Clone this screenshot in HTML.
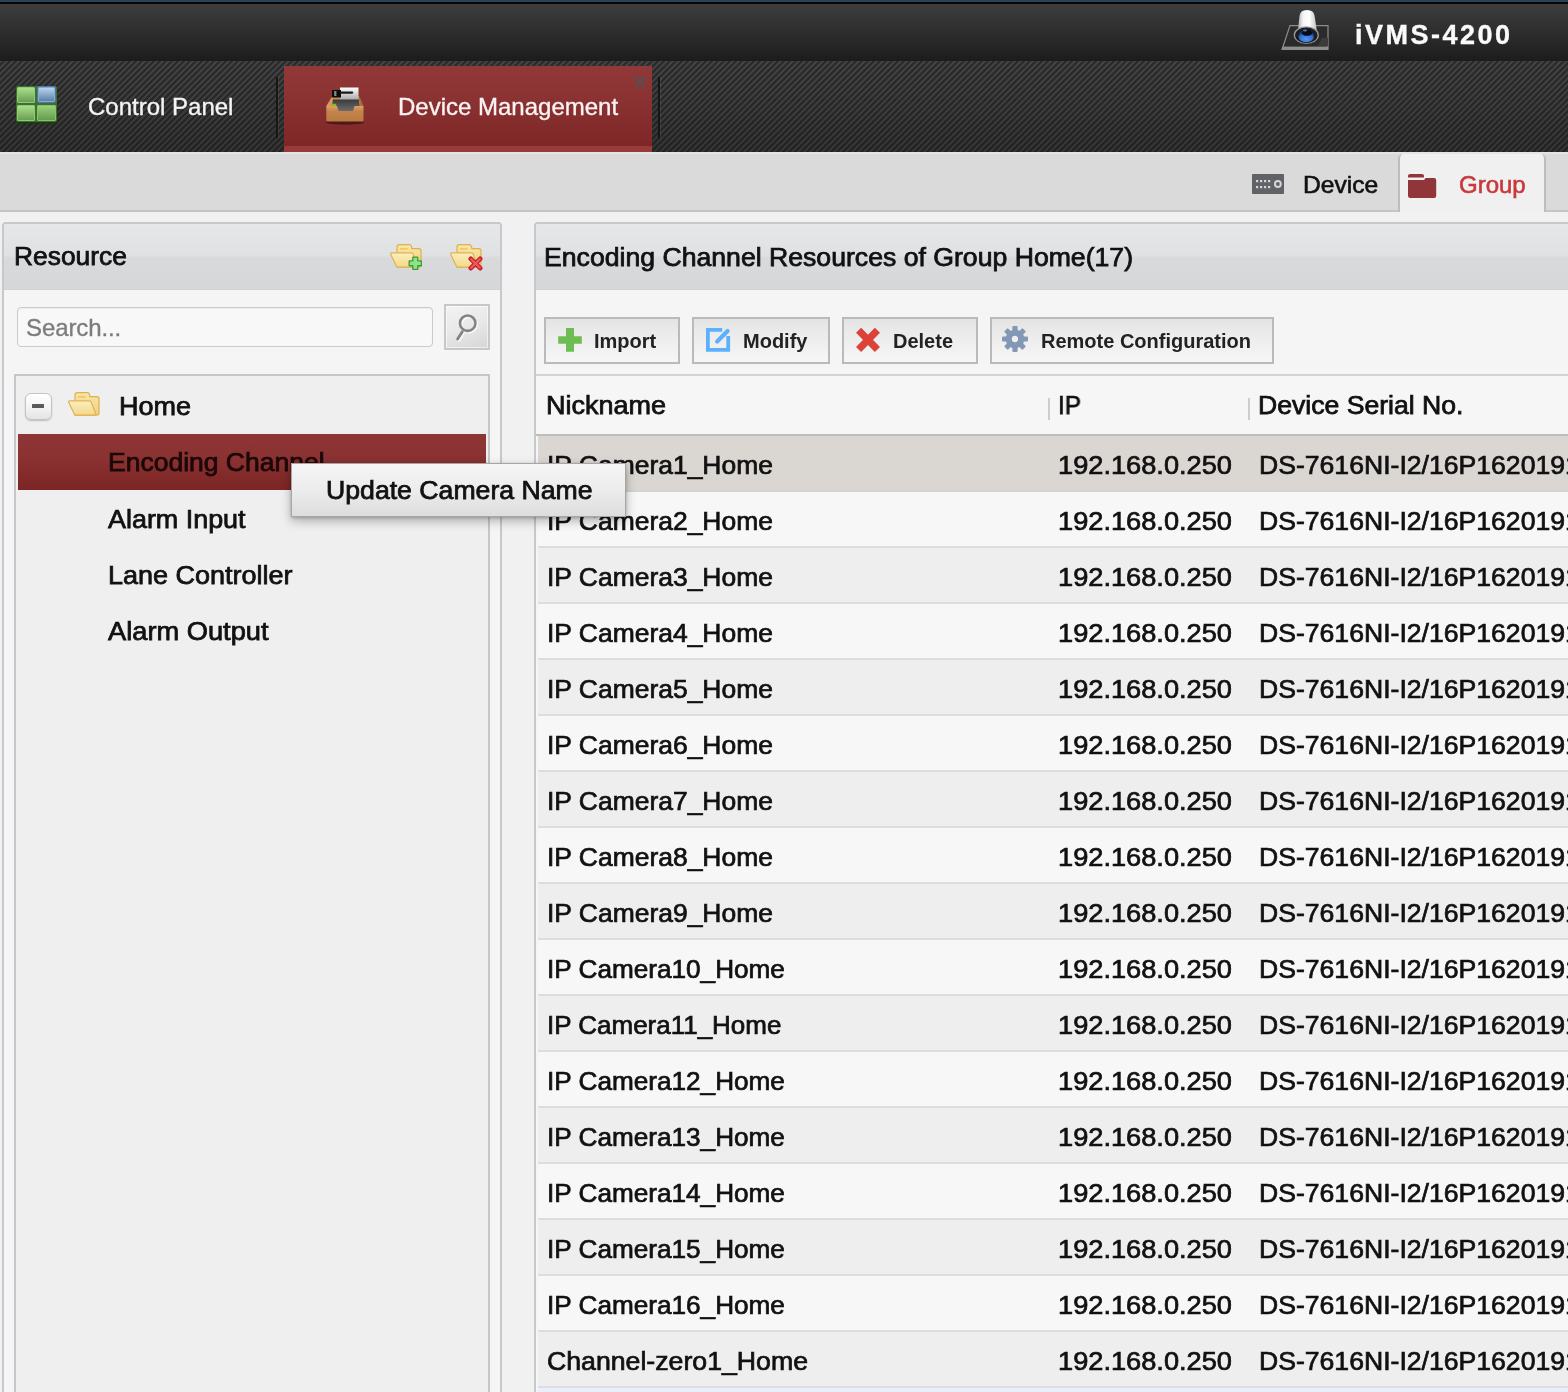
<!DOCTYPE html>
<html>
<head>
<meta charset="utf-8">
<title>iVMS-4200</title>
<style>
*{box-sizing:border-box;margin:0;padding:0}
html,body{width:1568px;height:1392px;overflow:hidden;background:#f1f1f1;font-family:"Liberation Sans",sans-serif;color:#111}
.abs{position:absolute}
.t{position:absolute;white-space:nowrap;line-height:1;transform-origin:0 0;-webkit-text-stroke:0.35px;will-change:transform}
/* ---------- top chrome ---------- */
#topline{left:0;top:0;width:1568px;height:2px;background:#2a4256}
#topblack{left:0;top:2px;width:1568px;height:2px;background:#060606}
#titlebar{left:0;top:4px;width:1568px;height:57px;background:linear-gradient(#3d3d3d 0%,#323232 35%,#252525 75%,#1d1c1c 100%)}
#tabbar{left:0;top:61px;width:1568px;height:91px;
 background-color:#2b2b2b;
 background-image:linear-gradient(135deg,#424242 25%,#2b2b2b 25%,#2b2b2b 50%,#424242 50%,#424242 75%,#2b2b2b 75%);
 background-size:6px 6px}
#tabshade{left:0;top:61px;width:1568px;height:91px;background:linear-gradient(rgba(0,0,0,.0) 0%,rgba(0,0,0,.12) 60%,rgba(0,0,0,.22) 100%)}
#redtab{left:284px;top:66px;width:368px;height:86px;background:linear-gradient(#913939 0%,#8a3131 40%,#7f2727 92%,#7f2727 92%)}
#redtabfoot{left:284px;top:146px;width:368px;height:6px;background:#993a3a}
.sep{width:2px;background:#161616;box-shadow:1px 0 0 rgba(255,255,255,.08)}
/* ---------- sub bar ---------- */
#subbar{left:0;top:152px;width:1568px;height:60px;background:#dadada;border-top:2px solid #e4e4e4;border-bottom:2px solid #c5c5c5}
#grouptab{left:1398px;top:154px;width:148px;height:58px;background:#f0f0f0;border-left:2px solid #bdbdbd;border-right:2px solid #bdbdbd;border-radius:5px 5px 0 0}
/* ---------- panels ---------- */
.panel{border:2px solid #c6c8cc;background:#f5f5f5;border-radius:4px;overflow:hidden}
.phead{left:0;top:0;height:66px;background:linear-gradient(#e6e7e8 0%,#e0e1e2 48%,#d9dadc 52%,#d6d7d9 100%);border-bottom:1px solid #cfd0d3}

.inp{left:12.5px;top:82.5px;width:416.5px;height:40.5px;border:1.5px solid #c8cacc;border-radius:4px;background:#f8f8f8;box-shadow:inset 0 1px 1px rgba(0,0,0,.05)}
.sbtn{left:440.2px;top:80px;width:45.6px;height:46px;border:2px solid #c8c8c8;background:linear-gradient(160deg,#f3f3f3 0%,#e8e8e8 50%,#d6d6d6 100%);box-shadow:0 0 0 1px rgba(255,255,255,.55) inset}
.tree{left:10px;top:150px;width:476px;height:1060px;border:2px solid #c4c6c9;background:#efefef}
.selrow{left:2px;top:58px;width:468px;height:55.5px;background:linear-gradient(#8e3636 0%,#8a3131 45%,#7c2525 100%)}
.minus{left:8.6px;top:16.6px;width:27px;height:27px;border:1px solid #c4c4c4;border-radius:6px;background:linear-gradient(#ffffff 0%,#f6f6f6 45%,#e4e4e4 100%);box-shadow:0 1px 1.5px rgba(0,0,0,.22)}
.minus i{position:absolute;left:6.4px;top:10.6px;width:12px;height:3.4px;background:#5a5a5a;border-radius:.5px}
.sf{font-size:25px;color:#111;-webkit-text-stroke:0.75px}

.btn{top:92.5px;height:47px;border:2px solid #bababa;background:linear-gradient(#e4e4e4 0%,#ececec 40%,#f6f6f6 100%)}
.bt{font-size:20px;font-weight:bold;color:#222;top:106.8px;-webkit-text-stroke:0}
.tbline{left:0;top:150px;width:1036px;height:2px;background:#d2d3d5}
.thead{left:0;top:152px;width:1036px;height:60px;background:#f6f6f6;border-bottom:2px solid #bdbdbd}
.colsep{top:174px;width:2px;height:22px;background:#cdcdcd}
.row{left:2px;width:1036px;height:56px;border-bottom:2px solid #dddddd}
.row.a{background:#f7f7f7}
.row.b{background:#eeeeee}
.row.sel{background:#dad6d1;border-bottom-color:#d6d3ce}
.row .t{top:16.8px;font-size:25px;color:#111;-webkit-text-stroke:0.7px}
.c1{left:9px}.c2{left:520.3px;transform:scaleX(1.088)}.c3{left:720.5px;transform:scaleX(1.0636)}

#popup{left:290.5px;top:462.5px;width:335.5px;height:54.5px;border:1.5px solid #a6a6a6;background:linear-gradient(#f5f5f5 0%,#ececec 50%,#dddddd 100%);box-shadow:0 4px 10px rgba(0,0,0,.28),0 1px 3px rgba(0,0,0,.2)}
</style>
</head>
<body>
<svg width="0" height="0" style="position:absolute">
 <defs>
  <linearGradient id="fgb" x1="0" y1="0" x2="0" y2="1"><stop offset="0" stop-color="#f9e6a6"/><stop offset="1" stop-color="#efd07f"/></linearGradient>
  <linearGradient id="fgf" x1="0" y1="0" x2="0" y2="1"><stop offset="0" stop-color="#fcefbe"/><stop offset="1" stop-color="#f3d88a"/></linearGradient>
  <symbol id="folder" viewBox="0 0 32 24">
   <path d="M7,3 Q7,0.6 9.4,0.6 L19.2,0.6 Q21,0.6 21.4,2.4 L21.9,4.6 L28.8,4.6 Q31,4.6 31,6.8 L31,21 Q31,23.2 28.8,23.2 L7,23.2 Z" fill="url(#fgb)" stroke="#ddb050" stroke-width="1.2"/>
   <path d="M10,4.9 L17.6,4.9" stroke="#ecbf58" stroke-width="1.3" fill="none"/>
   <path d="M1.8,8.8 L21.3,8.8 Q22.6,8.8 23.1,10 L27.6,21.3 Q28.2,23.2 26.2,23.2 L8.3,23.2 Q6.9,23.2 6.3,21.9 L0.8,10.6 Q0.2,8.8 1.8,8.8 Z" fill="url(#fgf)" stroke="#dfb256" stroke-width="1.2"/>
  </symbol>
 </defs>
</svg>

<!-- top chrome -->
<div class="abs" id="topline"></div>
<div class="abs" id="topblack"></div>
<div class="abs" id="titlebar"></div>
<div class="abs" id="tabbar"></div>
<div class="abs" id="tabshade"></div>
<div class="abs" id="redtab"></div>
<div class="abs" id="redtabfoot"></div>
<div class="abs sep" style="left:276px;top:77px;height:61px"></div>
<div class="abs sep" style="left:658px;top:77px;height:61px"></div>
<div class="t" id="tx_cp" style="left:88px;top:95px;font-size:24px;color:#f4f4f4">Control Panel</div>
<div class="t" id="tx_dm" style="left:397.5px;top:95px;font-size:24px;color:#fbf3f3">Device Management</div>
<div class="t" id="tx_ivms" style="left:1355px;top:21.5px;font-size:27px;font-weight:bold;letter-spacing:2.5px;color:#fafafa">iVMS-4200</div>


<div class="abs" id="subbar"></div>
<div class="abs" id="grouptab"></div>
<!-- control panel icon -->
<div class="abs" id="ic_cp" style="left:16px;top:86px;width:40.5px;height:36px;background:#3f6f30;border-radius:2px;box-shadow:0 2px 2px rgba(25,60,18,.85)">
  <div class="abs" style="left:1px;top:1px;width:18px;height:16px;background:linear-gradient(#a9df89,#6a9e52);border:1px solid #8fcb72;border-radius:1px"></div>
  <div class="abs" style="left:21.7px;top:1px;width:17.3px;height:14.8px;background:linear-gradient(#b8d4ea,#5c81a9);border:1px solid #86acd0;border-radius:1px;box-shadow:0 0 0 1px #4a76a8"></div>
  <div class="abs" style="left:1px;top:19px;width:18px;height:16px;background:linear-gradient(#a9df89,#6a9e52);border:1px solid #8fcb72;border-radius:1px"></div>
  <div class="abs" style="left:21px;top:19px;width:19px;height:16px;background:linear-gradient(#98d278,#669a4e);border:1px solid #86c269;border-radius:1px"></div>
</div>
<!-- device management icon -->
<svg class="abs" id="ic_dm" style="left:322px;top:84px" width="46" height="44" viewBox="322 84 46 44">
  <defs>
   <linearGradient id="wd" x1="0" y1="0" x2="0" y2="1"><stop offset="0" stop-color="#dfa064"/><stop offset=".35" stop-color="#c28449"/><stop offset="1" stop-color="#b87a42"/></linearGradient>
   <linearGradient id="pn" x1="0" y1="0" x2="0" y2="1"><stop offset="0" stop-color="#ffffff"/><stop offset="1" stop-color="#a8a8a8"/></linearGradient>
   <linearGradient id="dk" x1="0" y1="0" x2="0" y2="1"><stop offset="0" stop-color="#3a3a3a"/><stop offset="1" stop-color="#6c6c6c"/></linearGradient>
  </defs>
  <ellipse cx="345" cy="122.5" rx="19" ry="2.2" fill="rgba(40,10,10,.55)"/>
  <path d="M333,96 L359,96 L361,106 L331,106 Z" fill="#c98a50"/>
  <rect x="340" y="87.5" width="18.5" height="12.5" fill="url(#pn)"/>
  <rect x="332" y="90" width="9" height="7.5" fill="#0c0c0c"/>
  <rect x="334.2" y="91" width="2.2" height="5" fill="#8a8a8a"/>
  <rect x="340" y="91.4" width="13.2" height="2.4" rx="1.2" fill="#1a1a1a"/>
  <path d="M332.5,99.4 L358.8,99.4 L360.3,111 L332.5,111 Z" fill="url(#dk)"/>
  <rect x="331.8" y="103.8" width="4.4" height="2.4" fill="#79c020"/>
  <path d="M326.3,106 L337,106 L338.5,111 L353,111 L354.5,106 L363.5,106 L363.5,120 Q363.5,121.6 362,121.6 L328,121.6 Q326.3,121.6 326.3,120 Z" fill="url(#wd)"/>
  <path d="M326.3,106 L331.5,97.5 L333,97.5 L331.5,106 Z" fill="#d89a5e"/>
  <path d="M363.5,106 L360,97.5 L359,97.5 L360.6,106 Z" fill="#a86c38"/>
</svg>
<!-- tab close x -->
<svg class="abs" style="left:632px;top:74px" width="16" height="16" viewBox="0 0 16 16"><path d="M3,3 L13,13 M13,3 L3,13" stroke="#5c4d50" stroke-width="2.6" fill="none"/></svg>
<!-- camera icon -->
<svg class="abs" id="ic_cam" style="left:1278px;top:6px" width="56" height="50" viewBox="1278 6 56 50">
  <defs>
   <linearGradient id="cy" x1="0" y1="0" x2="1" y2="0"><stop offset="0" stop-color="#9aa0aa"/><stop offset=".3" stop-color="#f4f4f4"/><stop offset=".6" stop-color="#ffffff"/><stop offset="1" stop-color="#bdbdbd"/></linearGradient>
   <radialGradient id="bl" cx=".5" cy=".75" r=".6"><stop offset="0" stop-color="#4f97f0"/><stop offset=".7" stop-color="#2f6fd0"/><stop offset="1" stop-color="#163c80"/></radialGradient>
  </defs>
  <path d="M1290,25.6 L1328,25.6 L1328,49.5 L1282,49.5 Z" fill="#2b2b2b" stroke="#8c8c8c" stroke-width="1.2"/>
  <rect x="1282" y="46.6" width="46" height="3" fill="#8e8e8e"/>
  <path d="M1322,38 L1328,38 L1328,46 L1318,46 Z" fill="#3c3c3c"/>
  <path d="M1298,30 L1299.5,16 Q1300,10 1307,10 Q1314,10 1314.6,16 L1317.2,33 Q1312,40 1306,40 Q1299,39 1297,33 Z" fill="url(#cy)"/>
  <ellipse cx="1306.3" cy="35" rx="12.6" ry="8.8" fill="#9a9a9a"/>
  <ellipse cx="1306.3" cy="35.2" rx="11.2" ry="7.8" fill="#1c1c1c"/>
  <ellipse cx="1306.2" cy="36.2" rx="7.8" ry="6" fill="url(#bl)"/>
  <ellipse cx="1307" cy="32.8" rx="5.2" ry="3" fill="#070b18"/>
  <ellipse cx="1305" cy="30.6" rx="2" ry="1" fill="#5a7ab8"/>
</svg>
<!-- device icon -->
<svg class="abs" id="ic_dev" style="left:1252px;top:174px" width="32" height="20" viewBox="0 0 32 20">
  <rect x="0" y="0" width="32" height="20" rx="1" fill="#606267"/>
  <g fill="#d6d6d6"><rect x="4" y="6" width="2.2" height="2.2"/><rect x="8" y="6" width="2.2" height="2.2"/><rect x="12" y="6" width="2.2" height="2.2"/><rect x="16" y="6" width="2.2" height="2.2"/>
  <rect x="4" y="12" width="2.2" height="2.2"/><rect x="8" y="12" width="2.2" height="2.2"/><rect x="12" y="12" width="2.2" height="2.2"/><rect x="16" y="12" width="2.2" height="2.2"/></g>
  <circle cx="25.9" cy="10" r="2.9" fill="none" stroke="#d6d6d6" stroke-width="2"/>
</svg>
<!-- group folder icon -->
<svg class="abs" id="ic_grp" style="left:1407px;top:173px" width="30" height="26" viewBox="1407 173 30 26">
  <path d="M1408,176 Q1408,174 1410,174 L1422,174 Q1424,174 1424,176 L1424,177.5 L1408,177.5 Z" fill="#90363a"/>
  <path d="M1408,180 L1423.5,180 Q1424.5,180 1424.8,179 Q1425,178 1426,178 L1434,178 Q1436.2,178 1436.2,180.2 L1436.2,195.8 Q1436.2,198 1434,198 L1410.2,198 Q1408,198 1408,195.8 Z" fill="#90363a"/>
</svg>
<!-- sub bar -->
<div class="t" id="tx_dev" style="left:1302.5px;top:173px;font-size:24px;color:#111;transform:scaleX(1.025);-webkit-text-stroke:0.6px">Device</div>
<div class="t" id="tx_grp" style="left:1458.8px;top:173px;font-size:24px;color:#c8393c;-webkit-text-stroke:0.6px">Group</div>

<!-- left panel -->
<div class="abs panel" id="lpanel" style="left:2px;top:222px;width:500px;height:1180px">
  <div class="abs phead" style="width:496px"></div>

  <div class="t sf" id="tx_res" style="left:9.5px;top:20.3px;transform:scaleX(1.055)">Resource</div>
  <div class="abs inp"></div>
  <div class="t" id="tx_search" style="left:21.8px;top:92px;font-size:24px;color:#7c7c7c;letter-spacing:-0.1px">Search...</div>
  <div class="abs sbtn"></div>

  <svg class="abs" style="left:386px;top:20px" width="32" height="24"><use href="#folder"/></svg>
  <svg class="abs" style="left:403.8px;top:31.8px" width="14.6" height="14.6" viewBox="0 0 16 16"><path d="M5.3,1.3 h5.4 v4 h4 v5.4 h-4 v4 h-5.4 v-4 h-4 v-5.4 h4 z" fill="#8fe48a" stroke="#3f9c3a" stroke-width="1.5" stroke-linejoin="round"/></svg>
  <svg class="abs" style="left:446px;top:20px" width="32" height="24"><use href="#folder"/></svg>
  <svg class="abs" style="left:463.6px;top:31.6px" width="15" height="15" viewBox="0 0 16 16"><path d="M3,3 L13,13 M13,3 L3,13" stroke="#c8202a" stroke-width="5" stroke-linecap="round" fill="none"/><path d="M3.4,3.4 L12.6,12.6 M12.6,3.4 L3.4,12.6" stroke="#ef5a60" stroke-width="2.2" stroke-linecap="round" fill="none"/></svg>
  <svg class="abs" style="left:449px;top:87px" width="32" height="34" viewBox="453 311 32 34"><g fill="none" stroke-linecap="round"><circle cx="469" cy="324.5" r="7.7" stroke="rgba(255,255,255,.75)" stroke-width="2.6"/><path d="M463.6,333.1 L458.9,340.4" stroke="rgba(255,255,255,.75)" stroke-width="2.8"/><circle cx="467.7" cy="323.2" r="7.7" stroke="#838383" stroke-width="2.6"/><path d="M462.3,331.8 L457.6,339.1" stroke="#838383" stroke-width="2.8"/></g></svg>
  <div class="abs tree" id="tree">
    <div class="abs minus"><i></i></div>
    <svg class="abs" style="left:52px;top:16px" width="32" height="24"><use href="#folder"/></svg>
    <div class="t sf" id="tx_home" style="left:103px;top:18.3px;transform:scaleX(1.08)">Home</div>
    <div class="abs selrow" id="selrow"></div>
    <div class="t sf" id="tx_enc" style="left:92.2px;top:74.3px;transform:scaleX(1.06);color:#1c0808">Encoding Channel</div>
    <div class="t sf" id="tx_ai" style="left:92.2px;top:130.5px;transform:scaleX(1.076)">Alarm Input</div>
    <div class="t sf" id="tx_lc" style="left:91.5px;top:186.6px;transform:scaleX(1.08)">Lane Controller</div>
    <div class="t sf" id="tx_ao" style="left:92.2px;top:242.6px;transform:scaleX(1.09)">Alarm Output</div>
  </div>
</div>
<!-- right panel -->
<div class="abs panel" id="rpanel" style="left:534px;top:222px;width:1040px;height:1180px">
  <div class="abs phead" style="width:1036px"></div>

  <div class="t sf" id="tx_title" style="left:7.6px;top:20.6px;transform:scaleX(1.065)">Encoding Channel Resources of Group Home(17)</div>
  <div class="abs btn" id="b_imp" style="left:8px;width:136px"></div>
  <div class="abs btn" id="b_mod" style="left:156px;width:138px"></div>
  <div class="abs btn" id="b_del" style="left:306px;width:136px"></div>
  <div class="abs btn" id="b_rc" style="left:454px;width:284px"></div>

  <svg class="abs" style="left:22px;top:104px" width="24" height="24" viewBox="558 328 24 24"><path d="M566,328 h8 v8.2 h7.8 v7.6 h-7.8 v8 h-8 v-8 h-7.8 v-7.6 h7.8 z" fill="#6cbd52"/></svg>
  <svg class="abs" style="left:169px;top:103px" width="28" height="26" viewBox="705 327 28 26"><g fill="none" stroke="#5cb1fd"><path d="M722.2,329.9 L707.9,329.9 L707.9,349.9 L728.2,349.9 L728.2,336" stroke-width="3.8"/><path d="M717.2,341.4 L727.6,331" stroke-width="4.2" stroke-linecap="round"/></g></svg>
  <svg class="abs" style="left:319px;top:103px" width="26" height="26" viewBox="855 327 26 26"><path d="M858.6,330.3 L877.4,349.5 M877.4,330.3 L858.6,349.5" stroke="#dc4238" stroke-width="7.2" fill="none"/></svg>
  <svg class="abs" id="ic_gear" style="left:465px;top:101px" width="28" height="28" viewBox="-14 -14 28 28"><g fill="#8298b4"><circle r="9.3"/><g id="teeth"><rect x="-2.6" y="-13" width="5.2" height="6" rx="1"/><rect x="-2.6" y="7" width="5.2" height="6" rx="1"/><rect x="-13" y="-2.6" width="6" height="5.2" rx="1"/><rect x="7" y="-2.6" width="6" height="5.2" rx="1"/></g><use href="#teeth" transform="rotate(45)"/></g><circle r="3.2" fill="#f0f0f0"/></svg>
  <div class="t bt" id="tx_imp" style="left:58.4px">Import</div>
  <div class="t bt" id="tx_mod" style="left:207px">Modify</div>
  <div class="t bt" id="tx_del" style="left:357px">Delete</div>
  <div class="t bt" id="tx_rc" style="left:504.6px">Remote Configuration</div>
  <div class="abs tbline"></div>
  <div class="abs thead"></div>
  <div class="t sf" id="tx_nick" style="left:9.8px;top:169px;transform:scaleX(1.08)">Nickname</div>
  <div class="abs colsep" style="left:512px"></div>
  <div class="t sf" id="tx_ip" style="left:521.8px;top:169px;transform:scaleX(0.97)">IP</div>
  <div class="abs colsep" style="left:712px"></div>
  <div class="t sf" id="tx_dsn" style="left:721.5px;top:169px;transform:scaleX(1.064)">Device Serial No.</div>
  <div class="abs row sel" style="top:212px"><div class="t c1" style="transform:scaleX(1.058)">IP Camera1_Home</div><div class="t c2">192.168.0.250</div><div class="t c3">DS-7616NI-I2/16P1620191</div></div>
  <div class="abs row a" style="top:268px"><div class="t c1" style="transform:scaleX(1.058)">IP Camera2_Home</div><div class="t c2">192.168.0.250</div><div class="t c3">DS-7616NI-I2/16P1620191</div></div>
  <div class="abs row b" style="top:324px"><div class="t c1" style="transform:scaleX(1.058)">IP Camera3_Home</div><div class="t c2">192.168.0.250</div><div class="t c3">DS-7616NI-I2/16P1620191</div></div>
  <div class="abs row a" style="top:380px"><div class="t c1" style="transform:scaleX(1.058)">IP Camera4_Home</div><div class="t c2">192.168.0.250</div><div class="t c3">DS-7616NI-I2/16P1620191</div></div>
  <div class="abs row b" style="top:436px"><div class="t c1" style="transform:scaleX(1.058)">IP Camera5_Home</div><div class="t c2">192.168.0.250</div><div class="t c3">DS-7616NI-I2/16P1620191</div></div>
  <div class="abs row a" style="top:492px"><div class="t c1" style="transform:scaleX(1.058)">IP Camera6_Home</div><div class="t c2">192.168.0.250</div><div class="t c3">DS-7616NI-I2/16P1620191</div></div>
  <div class="abs row b" style="top:548px"><div class="t c1" style="transform:scaleX(1.058)">IP Camera7_Home</div><div class="t c2">192.168.0.250</div><div class="t c3">DS-7616NI-I2/16P1620191</div></div>
  <div class="abs row a" style="top:604px"><div class="t c1" style="transform:scaleX(1.058)">IP Camera8_Home</div><div class="t c2">192.168.0.250</div><div class="t c3">DS-7616NI-I2/16P1620191</div></div>
  <div class="abs row b" style="top:660px"><div class="t c1" style="transform:scaleX(1.058)">IP Camera9_Home</div><div class="t c2">192.168.0.250</div><div class="t c3">DS-7616NI-I2/16P1620191</div></div>
  <div class="abs row a" style="top:716px"><div class="t c1" style="transform:scaleX(1.046)">IP Camera10_Home</div><div class="t c2">192.168.0.250</div><div class="t c3">DS-7616NI-I2/16P1620191</div></div>
  <div class="abs row b" style="top:772px"><div class="t c1" style="transform:scaleX(1.039)">IP Camera11_Home</div><div class="t c2">192.168.0.250</div><div class="t c3">DS-7616NI-I2/16P1620191</div></div>
  <div class="abs row a" style="top:828px"><div class="t c1" style="transform:scaleX(1.046)">IP Camera12_Home</div><div class="t c2">192.168.0.250</div><div class="t c3">DS-7616NI-I2/16P1620191</div></div>
  <div class="abs row b" style="top:884px"><div class="t c1" style="transform:scaleX(1.046)">IP Camera13_Home</div><div class="t c2">192.168.0.250</div><div class="t c3">DS-7616NI-I2/16P1620191</div></div>
  <div class="abs row a" style="top:940px"><div class="t c1" style="transform:scaleX(1.046)">IP Camera14_Home</div><div class="t c2">192.168.0.250</div><div class="t c3">DS-7616NI-I2/16P1620191</div></div>
  <div class="abs row b" style="top:996px"><div class="t c1" style="transform:scaleX(1.046)">IP Camera15_Home</div><div class="t c2">192.168.0.250</div><div class="t c3">DS-7616NI-I2/16P1620191</div></div>
  <div class="abs row a" style="top:1052px"><div class="t c1" style="transform:scaleX(1.046)">IP Camera16_Home</div><div class="t c2">192.168.0.250</div><div class="t c3">DS-7616NI-I2/16P1620191</div></div>
  <div class="abs row b" style="top:1108px"><div class="t c1" style="transform:scaleX(1.067)">Channel-zero1_Home</div><div class="t c2">192.168.0.250</div><div class="t c3">DS-7616NI-I2/16P1620191</div></div>
  <div class="abs" style="left:2px;top:1164px;width:1036px;height:20px;background:#e8eefa"></div>
</div>
<!-- context menu -->
<div class="abs" id="popup"></div>
<div class="t sf" id="tx_pop" style="left:325.5px;top:477.8px;transform:scaleX(1.066)">Update Camera Name</div>
</body>
</html>
